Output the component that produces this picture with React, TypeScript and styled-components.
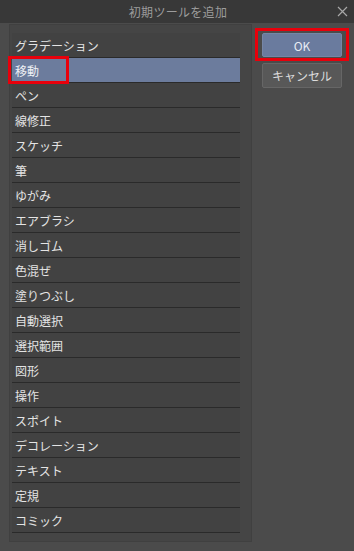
import React, { useState } from 'react';
import styled, { createGlobalStyle } from 'styled-components';

const GlobalStyle = createGlobalStyle`
  html, body {
    margin: 0;
    padding: 0;
    background: #4b4b4b;
  }
  * {
    box-sizing: border-box;
  }
`;

const tools = [
  'グラデーション',
  '移動',
  'ペン',
  '線修正',
  'スケッチ',
  '筆',
  'ゆがみ',
  'エアブラシ',
  '消しゴム',
  '色混ぜ',
  '塗りつぶし',
  '自動選択',
  '選択範囲',
  '図形',
  '操作',
  'スポイト',
  'デコレーション',
  'テキスト',
  '定規',
  'コミック',
];

const Dialog = styled.div`
  position: relative;
  width: 354px;
  height: 551px;
  background: #4b4b4b;
  font-family: 'Noto Sans CJK JP', 'Noto Sans', sans-serif;
  display: flex;
  flex-direction: column;
  overflow: hidden;
`;

const TitleBar = styled.div`
  position: relative;
  height: 23px;
  flex: none;
  background: #383838;
  display: flex;
  align-items: center;
  justify-content: center;
`;

const Title = styled.div`
  font-size: 12px;
  color: #9c9c9c;
  letter-spacing: 0.3px;
  padding-left: 2px;
`;

const CloseButton = styled.div`
  position: absolute;
  right: 5px;
  top: 5px;
  width: 13px;
  height: 13px;
  display: flex;
  align-items: center;
  justify-content: center;
`;

const Body = styled.div`
  flex: 1;
  display: flex;
  padding: 1px 0 9px 9px;
  gap: 10px;
`;

const ListFrame = styled.div`
  width: 243px;
  background: #454545;
  border: 1px solid #404040;
  padding: 8px 11px 8px 2px;
`;

const List = styled.div`
  display: flex;
  flex-direction: column;
`;

const Row = styled.div<{ $selected?: boolean }>`
  height: 25px;
  padding: 0 3px;
  display: flex;
  align-items: center;
  font-size: 12px;
  color: ${(p) => (p.$selected ? '#eef0f4' : '#e4e4e4')};
  background: ${(p) => (p.$selected ? '#6c7c9d' : '#424242')};
  border-bottom: 1px solid #2a2a2a;
  cursor: default;
`;

const Side = styled.div`
  width: 80px;
  padding-top: 9px;
  display: flex;
  flex-direction: column;
  gap: 6px;
`;

const Button = styled.div<{ $primary?: boolean }>`
  height: ${(p) => (p.$primary ? 24 : 25)}px;
  border-radius: 2px;
  display: flex;
  align-items: center;
  justify-content: center;
  font-size: 12px;
  color: ${(p) => (p.$primary ? '#e8ecf4' : '#dcdcdc')};
  background: ${(p) => (p.$primary ? '#6a7b9e' : '#585858')};
  border: 1px solid ${(p) => (p.$primary ? '#7686a6' : '#666666')};
`;

const Highlight = styled.div<{ $x: number; $y: number; $w: number; $h: number }>`
  position: absolute;
  left: ${(p) => p.$x}px;
  top: ${(p) => p.$y}px;
  width: ${(p) => p.$w}px;
  height: ${(p) => p.$h}px;
  border: 3px solid #e8000b;
  pointer-events: none;
`;

export default function App() {
  const [selected, setSelected] = useState(1);

  return (
    <Dialog>
      <GlobalStyle />
      <TitleBar>
        <Title>初期ツールを追加</Title>
        <CloseButton>
          <svg width="11" height="11" viewBox="0 0 11 11">
            <path d="M1 1 L10 10 M10 1 L1 10" stroke="#a8a8a8" strokeWidth="1.2" fill="none" />
          </svg>
        </CloseButton>
      </TitleBar>

      <Body>
        <ListFrame>
          <List>
            {tools.map((t, i) => (
              <Row key={t} $selected={i === selected} onClick={() => setSelected(i)}>
                {t}
              </Row>
            ))}
          </List>
        </ListFrame>

        <Side>
          <Button $primary>OK</Button>
          <Button>キャンセル</Button>
        </Side>
      </Body>

      <Highlight $x={8} $y={56} $w={61} $h={28} />
      <Highlight $x={255} $y={28} $w={94} $h={33} />
    </Dialog>
  );
}
